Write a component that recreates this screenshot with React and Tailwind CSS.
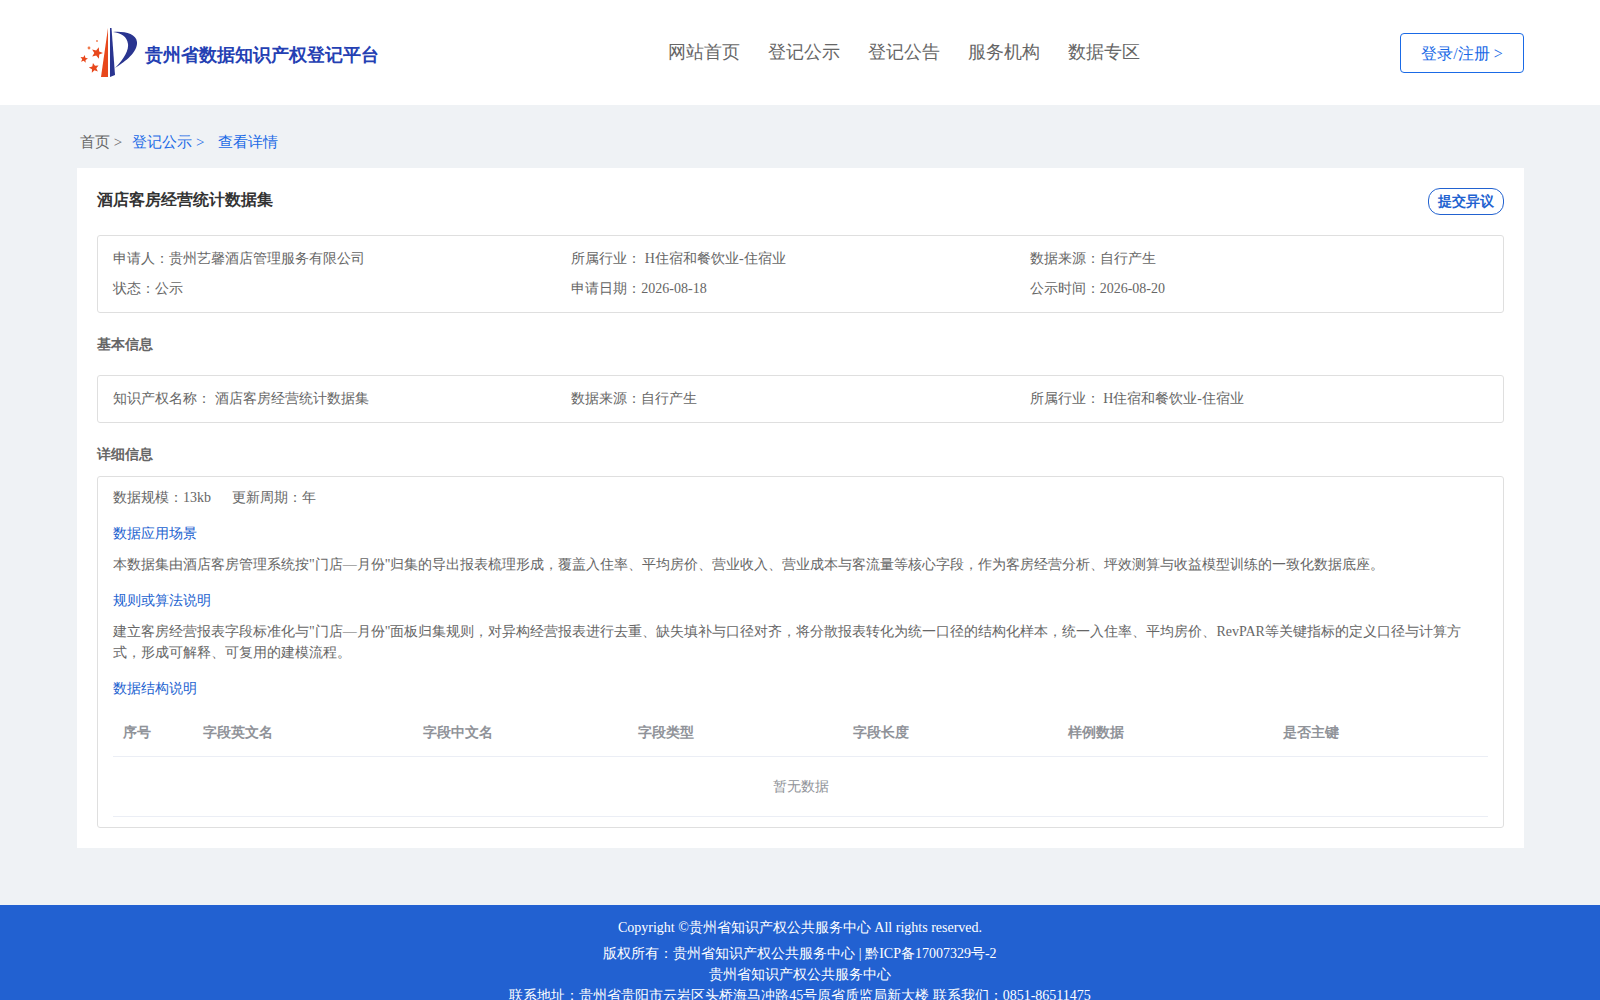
const Star = ({ x, y, r, rot = 0 }) => {
  const pts = [];
  for (let i = 0; i < 10; i++) {
    const a = (Math.PI / 5) * i - Math.PI / 2 + rot;
    const q = i % 2 ? r * 0.45 : r;
    pts.push(`${(x + q * Math.cos(a)).toFixed(2)},${(y + q * Math.sin(a)).toFixed(2)}`);
  }
  return <polygon points={pts.join(" ")} fill="#e8481c" />;
};

const Logo = () => (
  <svg width="60" height="55" viewBox="0 0 60 55" className="shrink-0">
    <Star x={20} y={28} r={6} rot={0.3} />
    <Star x={7} y={34} r={4} rot={0.2} />
    <Star x={17} y={43} r={5.2} rot={-0.2} />
    <circle cx={12} cy={23} r={1.4} fill="#ef7a4d" />
    <circle cx={20} cy={16} r={0.9} fill="#ef7a4d" />
    <path d="M24 52 L31 3 L31 52 Z" fill="#e8481c" />
    <path d="M33 3 L34.5 3 L38 50 L33 52 Z" fill="#2a3590" />
    <path d="M36 7 C48 6 61 9 60 19 C59 29 46 38 38 43 C44 37 52 27 51 19 C50 11 44 8 36 7 Z" fill="#2a3590" />
  </svg>
);

const Row = ({ children, cls = "" }) => (
  <div className={`grid grid-cols-3 ${cls}`}>{children}</div>
);

export default function App() {
  const headers = [
    ["序号", "w-[80px]"],
    ["字段英文名", "w-[220px]"],
    ["字段中文名", "w-[215px]"],
    ["字段类型", "w-[215px]"],
    ["字段长度", "w-[215px]"],
    ["样例数据", "w-[215px]"],
    ["是否主键", "flex-1"],
  ];
  return (
    <div className="h-[1000px] overflow-hidden bg-[#eff2f5] text-[14px] text-[#666] font-['Liberation_Serif',serif]">
      <header className="h-[105px] bg-white pl-[77px] pr-[76px] flex items-center justify-between">
        <div className="flex items-center w-[400px]">
          <Logo />
          <span className="text-[18px] font-bold text-[#2440b3] ml-[8px] mt-[5px]">贵州省数据知识产权登记平台</span>
        </div>
        <nav className="flex gap-[28px] text-[18px] text-[#666] -mt-[1px] -ml-[70px]">
          <span>网站首页</span>
          <span>登记公示</span>
          <span>登记公告</span>
          <span>服务机构</span>
          <span>数据专区</span>
        </nav>
        <button className="w-[124px] h-[40px] rounded-[4px] border border-[#1a6ae6] text-[16px] text-[#1a6ae6] mt-[1px] pt-[2px]">登录/注册 &gt;</button>
      </header>

      <main className="pl-[77px] pr-[76px]">
        <div className="h-[63px] flex items-center text-[15px] pl-[3px] pt-[11px]">
          <span>首页 &gt;</span>
          <span className="ml-[10px] text-[#1a6ae6]">登记公示 &gt;</span>
          <span className="ml-[14px] text-[#1a6ae6]">查看详情</span>
        </div>

        <section className="bg-white h-[680px] px-[20px] pt-[20px]">
          <div className="flex justify-between items-start h-[47px]">
            <h1 className="text-[16px] font-bold text-[#333] leading-[24px]">酒店客房经营统计数据集</h1>
            <button className="w-[76px] h-[27px] rounded-[12px] border border-[#2262d0] text-[14px] font-bold text-[#2262d0]">提交异议</button>
          </div>

          <div className="border border-[#dfdfdf] rounded-[3px] h-[78px] px-[15px] pt-[8px] leading-[30px]">
            <Row>
              <span>申请人：贵州艺馨酒店管理服务有限公司</span>
              <span>所属行业： H住宿和餐饮业-住宿业</span>
              <span>数据来源：自行产生</span>
            </Row>
            <Row>
              <span>状态：公示</span>
              <span>申请日期：2026-08-18</span>
              <span>公示时间：2026-08-20</span>
            </Row>
          </div>

          <h2 className="text-[14px] font-bold text-[#666] h-[62px] leading-[64px]">基本信息</h2>

          <div className="border border-[#dfdfdf] rounded-[3px] h-[48px] px-[15px] flex items-center">
            <Row cls="w-full -mt-[1px]">
              <span>知识产权名称： 酒店客房经营统计数据集</span>
              <span>数据来源：自行产生</span>
              <span>所属行业： H住宿和餐饮业-住宿业</span>
            </Row>
          </div>

          <h2 className="text-[14px] font-bold text-[#666] h-[53px] leading-[64px]">详细信息</h2>

          <div className="border border-[#dfdfdf] rounded-[3px] h-[352px] px-[15px] pt-[11px]">
            <div className="flex gap-[21px] leading-[20px]">
              <span>数据规模：13kb</span>
              <span>更新周期：年</span>
            </div>
            <div className="text-[#2262d0] mt-[16px] leading-[20px]">数据应用场景</div>
            <p className="mt-[10px] leading-[21px] pr-[20px]">本数据集由酒店客房管理系统按"门店—月份"归集的导出报表梳理形成，覆盖入住率、平均房价、营业收入、营业成本与客流量等核心字段，作为客房经营分析、坪效测算与收益模型训练的一致化数据底座。</p>
            <div className="text-[#2262d0] mt-[16px] leading-[20px]">规则或算法说明</div>
            <p className="mt-[10px] leading-[21px] pr-[20px]">建立客房经营报表字段标准化与"门店—月份"面板归集规则，对异构经营报表进行去重、缺失填补与口径对齐，将分散报表转化为统一口径的结构化样本，统一入住率、平均房价、RevPAR等关键指标的定义口径与计算方式，形成可解释、可复用的建模流程。</p>
            <div className="text-[#2262d0] mt-[16px] leading-[20px]">数据结构说明</div>
            <div className="flex h-[48px] mt-[10px] items-center border-b border-[#ebeef5] font-bold text-[#909399]">
              {headers.map(([t, w]) => (
                <div key={t} className={`${w} pl-[10px]`}>{t}</div>
              ))}
            </div>
            <div className="h-[60px] flex items-center justify-center border-b border-[#ebeef5] text-[#909399]">暂无数据</div>
          </div>
        </section>
      </main>

      <footer className="mt-[57px] bg-[#2261d1] text-white text-[14px] text-center pt-[12px]">
        <div className="leading-[21px]">Copyright ©贵州省知识产权公共服务中心 All rights reserved.</div>
        <div className="leading-[21px] mt-[5px]">版权所有：贵州省知识产权公共服务中心 | 黔ICP备17007329号-2</div>
        <div className="leading-[21px]">贵州省知识产权公共服务中心</div>
        <div className="leading-[21px]">联系地址：贵州省贵阳市云岩区头桥海马冲路45号原省质监局新大楼 联系我们：0851-86511475</div>
      </footer>
    </div>
  );
}
